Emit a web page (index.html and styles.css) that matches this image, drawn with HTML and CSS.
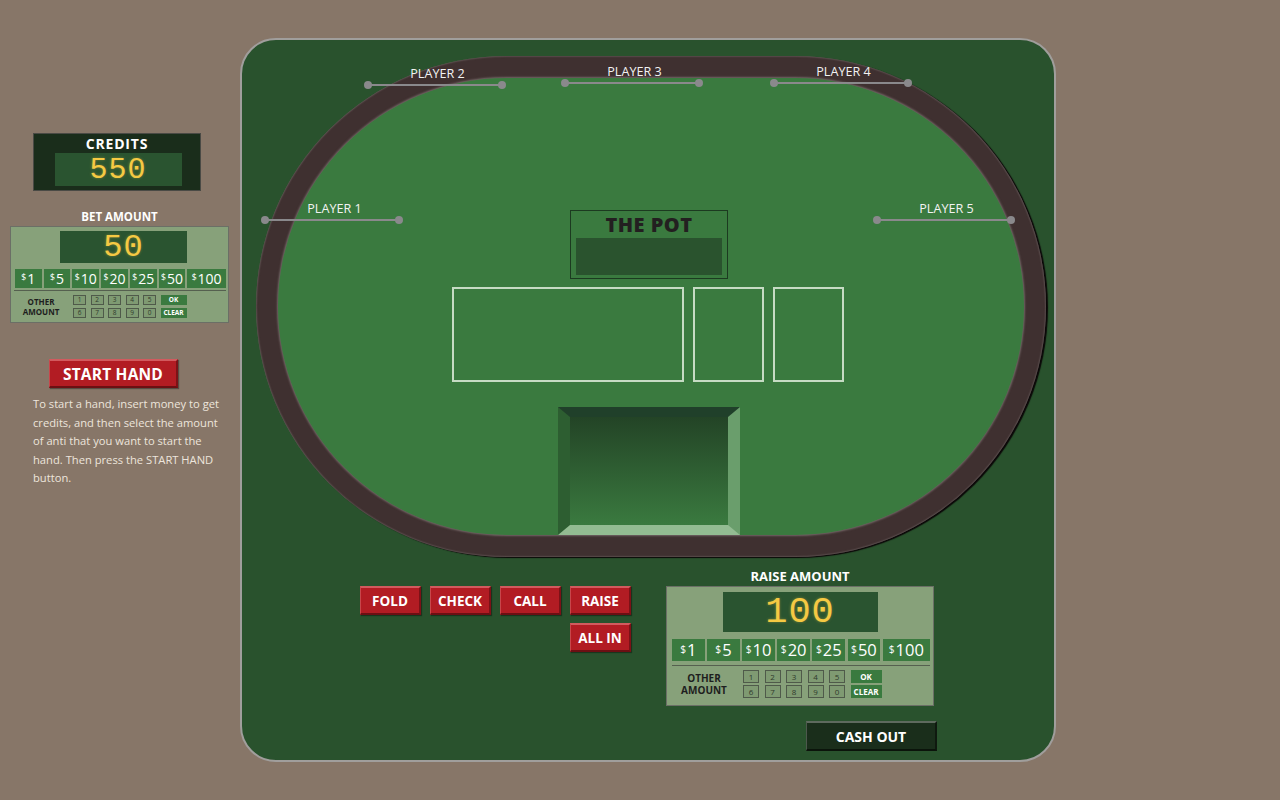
FILE: index.html
```html
<!DOCTYPE html>
<html lang="en">
<head>
<meta charset="utf-8">
<title>Poker Table</title>
<link rel="stylesheet" href="styles.css">
</head>
<body>
<div class="page">
  <aside class="side">
    <div class="credits">
      <div class="credits-title">CREDITS</div>
      <div class="lcd lcd-credits">550</div>
    </div>

    <div class="amount amount-bet">
      <div class="amount-title">BET AMOUNT</div>
      <div class="amount-panel">
        <div class="lcd">50</div>
        <div class="chips">
          <span class="chip"><sup>$</sup>1</span>
          <span class="chip"><sup>$</sup>5</span>
          <span class="chip"><sup>$</sup>10</span>
          <span class="chip"><sup>$</sup>20</span>
          <span class="chip"><sup>$</sup>25</span>
          <span class="chip"><sup>$</sup>50</span>
          <span class="chip"><sup>$</sup>100</span>
        </div>
        <div class="divider"></div>
        <div class="other">
          <div class="other-label">OTHER<br>AMOUNT</div>
          <div class="keys">
            <span class="key">1</span><span class="key">2</span><span class="key">3</span><span class="key">4</span><span class="key">5</span><span class="key-act">OK</span>
            <span class="key">6</span><span class="key">7</span><span class="key">8</span><span class="key">9</span><span class="key">0</span><span class="key-act">CLEAR</span>
          </div>
        </div>
      </div>
    </div>

    <button class="btn-red start">START HAND</button>
    <p class="help">To start a hand, insert money to get<br>credits, and then select the amount<br>of anti that you want to start the<br>hand. Then press the START HAND<br>button.</p>
  </aside>

  <main class="table">
    <div class="rail">
      <div class="felt">
        <div class="pot">
          <div class="pot-title">THE POT</div>
          <div class="pot-value"></div>
        </div>
        <div class="cards">
          <div class="card-slot wide"></div>
          <div class="card-slot"></div>
          <div class="card-slot"></div>
        </div>
        <div class="tray"></div>
      </div>
    </div>

    <div class="seat seat-1"><span class="seat-name">PLAYER 1</span><span class="seat-line"></span></div>
    <div class="seat seat-2"><span class="seat-name">PLAYER 2</span><span class="seat-line"></span></div>
    <div class="seat seat-3"><span class="seat-name">PLAYER 3</span><span class="seat-line"></span></div>
    <div class="seat seat-4"><span class="seat-name">PLAYER 4</span><span class="seat-line"></span></div>
    <div class="seat seat-5"><span class="seat-name">PLAYER 5</span><span class="seat-line"></span></div>

    <div class="controls">
      <div class="actions">
        <button class="btn-red">FOLD</button>
        <button class="btn-red">CHECK</button>
        <button class="btn-red">CALL</button>
        <button class="btn-red">RAISE</button>
        <button class="btn-red allin">ALL IN</button>
      </div>
      <div class="raise-col">
        <div class="amount amount-raise">
          <div class="amount-title">RAISE AMOUNT</div>
          <div class="amount-panel">
            <div class="lcd">100</div>
            <div class="chips">
              <span class="chip"><sup>$</sup>1</span>
              <span class="chip"><sup>$</sup>5</span>
              <span class="chip"><sup>$</sup>10</span>
              <span class="chip"><sup>$</sup>20</span>
              <span class="chip"><sup>$</sup>25</span>
              <span class="chip"><sup>$</sup>50</span>
              <span class="chip"><sup>$</sup>100</span>
            </div>
            <div class="divider"></div>
            <div class="other">
              <div class="other-label">OTHER<br>AMOUNT</div>
              <div class="keys">
                <span class="key">1</span><span class="key">2</span><span class="key">3</span><span class="key">4</span><span class="key">5</span><span class="key-act">OK</span>
                <span class="key">6</span><span class="key">7</span><span class="key">8</span><span class="key">9</span><span class="key">0</span><span class="key-act">CLEAR</span>
              </div>
            </div>
          </div>
        </div>
        <button class="cashout">CASH OUT</button>
      </div>
    </div>
  </main>
</div>
</body>
</html>
```

FILE: styles.css
```css
* { box-sizing: border-box; }

html, body {
  margin: 0;
  padding: 0;
  background: #877668;
  font-family: "Open Sans", "Noto Sans", sans-serif;
}

.page {
  display: flex;
  align-items: flex-start;
  width: 1280px;
  height: 800px;
}

/* ---------- sidebar ---------- */
.side {
  width: 240px;
  flex: none;
  padding-top: 133px;
  display: flex;
  flex-direction: column;
  align-items: flex-start;
}

.credits {
  margin-left: 33px;
  width: 168px;
  height: 58px;
  background: #1a2d1b;
  border: 1px solid #4a4a45;
  display: flex;
  flex-direction: column;
  align-items: center;
}

.credits-title {
  height: 19px;
  line-height: 19px;
  color: #fff;
  font-weight: 700;
  font-size: 14px;
  letter-spacing: 0.8px;
}

.lcd {
  background: #2a5430;
  color: #f5c943;
  font-family: "Liberation Mono", "DejaVu Sans Mono", monospace;
  text-align: center;
  text-shadow: 0 0 3px rgba(245, 201, 67, 0.4);
}

.lcd-credits {
  width: 127px;
  height: 33px;
  line-height: 34px;
  font-size: 30px;
  letter-spacing: 1px;
  margin-left: 2px;
}

/* ---------- amount panels ---------- */
.amount-title {
  color: #fff;
  font-weight: 700;
  text-align: center;
}

.amount-panel {
  background: #87a17a;
  border: 1px solid #6b6f66;
  display: flex;
  flex-direction: column;
}

.amount-panel .lcd {
  align-self: center;
}

.chips {
  display: grid;
  grid-template-columns: repeat(6, 1fr) 1.45fr;
}

.chip {
  background: #3a7a3f;
  color: #fff;
  text-align: center;
  white-space: nowrap;
}

.chip sup {
  font-size: 62%;
  vertical-align: top;
  position: relative;
  top: -1px;
  margin-right: 1px;
}

.divider {
  height: 1px;
  background: #55604f;
}

.other {
  display: flex;
  align-items: center;
}

.other-label {
  color: #1e1e1e;
  font-weight: 700;
  text-align: center;
}

.keys {
  display: grid;
}

.key {
  border: 1px solid #4f5a4a;
  background: #7f9a72;
  color: #2f3a2c;
  text-align: center;
}

.key-act {
  background: #3a7a3f;
  color: #fff;
  font-weight: 700;
  text-align: center;
}

/* bet (small) */
.amount-bet {
  margin-top: 19px;
  margin-left: 10px;
  width: 219px;
}

.amount-bet .amount-title {
  height: 16px;
  line-height: 14px;
  font-size: 11.5px;
}

.amount-bet .amount-panel {
  height: 97px;
  padding: 4px 2px 0 3px;
}

.amount-bet .lcd {
  width: 127px;
  height: 32px;
  line-height: 33px;
  font-size: 32px;
  letter-spacing: 1px;
  margin-left: 7px;
}

.amount-bet .chips {
  margin-top: 6px;
  margin-left: 1px;
  height: 19px;
  column-gap: 2px;
}

.amount-bet .chip {
  font-size: 14px;
  line-height: 19px;
}

.amount-bet .divider {
  margin-top: 2px;
}

.amount-bet .other {
  margin-top: 4px;
  padding-left: 1px;
}

.amount-bet .other-label {
  width: 52px;
  font-size: 8px;
  line-height: 10px;
}

.amount-bet .keys {
  margin-left: 6px;
  grid-template-columns: repeat(5, 13px) 26px;
  grid-template-rows: 10px 10px;
  column-gap: 4.5px;
  row-gap: 3px;
}

.amount-bet .key {
  font-size: 6.5px;
  line-height: 8px;
}

.amount-bet .key-act {
  font-size: 6.5px;
  line-height: 10px;
}

/* raise (large) */
.amount-raise {
  width: 268px;
}

.amount-raise .amount-title {
  height: 17px;
  line-height: 15px;
  font-size: 13px;
}

.amount-raise .amount-panel {
  height: 120px;
  padding: 5px 3px 0 5px;
}

.amount-raise .lcd {
  width: 155px;
  height: 40px;
  line-height: 41px;
  font-size: 37px;
  letter-spacing: 1px;
  margin-left: -2px;
}

.amount-raise .chips {
  margin-top: 7px;
  height: 22px;
  column-gap: 2.5px;
}

.amount-raise .chip {
  font-size: 16.5px;
  line-height: 22px;
}

.amount-raise .divider {
  margin-top: 4px;
}

.amount-raise .other {
  margin-top: 4px;
}

.amount-raise .other-label {
  width: 64px;
  font-size: 10px;
  line-height: 12px;
}

.amount-raise .keys {
  margin-left: 7px;
  grid-template-columns: repeat(5, 16px) 31px;
  grid-template-rows: 13px 13px;
  column-gap: 5.5px;
  row-gap: 2px;
}

.amount-raise .key {
  font-size: 8px;
  line-height: 11px;
}

.amount-raise .key-act {
  font-size: 8px;
  line-height: 13px;
}

/* ---------- buttons ---------- */
.btn-red {
  display: block;
  padding: 0;
  margin: 0;
  background: #b21c23;
  color: #fff;
  font-family: "Open Sans", "Noto Sans", sans-serif;
  font-weight: 700;
  font-size: 13.5px;
  border-top: 2px solid #d25a5e;
  border-left: 1px solid #c8464b;
  border-bottom: 2px solid #6c0f13;
  border-right: 2px solid #7c1217;
  box-shadow: 1px 1px 1px rgba(0, 0, 0, 0.35);
}

.start {
  margin-top: 36px;
  margin-left: 49px;
  width: 129px;
  height: 29px;
  font-size: 15.5px;
  letter-spacing: 0.2px;
}

.help {
  margin: 7px 0 0 33px;
  width: 205px;
  color: #ede5dc;
  font-size: 11.2px;
  line-height: 18.5px;
}

/* ---------- table ---------- */
.table {
  position: relative;
  flex: none;
  margin-top: 38px;
  width: 816px;
  height: 724px;
  background: #29522d;
  border: 2px solid #a09e9c;
  border-radius: 36px;
}

.rail {
  margin: 16px 0 0 14px;
  width: 790px;
  height: 501px;
  padding: 22px;
  border-radius: 251px;
  background: #3f3030;
  box-shadow: inset 0 0 2px 0 rgba(175, 165, 165, 0.7), 2px 1px 1px #0b0808;
}

.felt {
  height: 100%;
  border-radius: 229px;
  background: #3a7a3f;
  box-shadow: 0 0 2px 1px rgba(150, 138, 138, 0.6);
  padding-top: 132px;
  display: flex;
  flex-direction: column;
  align-items: flex-start;
}

.pot {
  margin-left: 292px;
  width: 158px;
  height: 69px;
  border: 1px solid #1c3a20;
  padding: 0 5px 3px 5px;
  display: flex;
  flex-direction: column;
}

.pot-title {
  height: 27px;
  line-height: 28px;
  text-align: center;
  color: #231f20;
  font-weight: 800;
  font-size: 20px;
  letter-spacing: 0.5px;
}

.pot-value {
  flex: 1;
  background: #2a532e;
}

.cards {
  margin-top: 8px;
  margin-left: 174px;
  display: flex;
  gap: 9px;
}

.card-slot {
  width: 71px;
  height: 95px;
  border: 2px solid #c6dbc4;
}

.card-slot.wide {
  width: 232px;
}

.tray {
  margin-top: 25px;
  margin-left: 280px;
  width: 182px;
  height: 128px;
  border-top: 10px solid #20402a;
  border-left: 12px solid #2d5e31;
  border-right: 12px solid #6a9e6c;
  border-bottom: 10px solid #93bc92;
  background: linear-gradient(#234426, #3a7a3f);
}

/* seats are pinned on the table canvas */
.seat {
  position: absolute;
  width: 142px;
  display: flex;
  flex-direction: column;
  align-items: center;
}

.seat-name {
  height: 14px;
  line-height: 14px;
  color: #f2f2f2;
  font-size: 12.6px;
  margin-left: 5px;
  white-space: nowrap;
}

.seat-line {
  position: relative;
  display: block;
  width: 142px;
  height: 8px;
  background: linear-gradient(#8a898c, #8a898c) center / calc(100% - 8px) 2px no-repeat;
}

.seat-line::before,
.seat-line::after {
  content: "";
  position: absolute;
  top: 0;
  width: 8px;
  height: 8px;
  border-radius: 50%;
  background: #8a898c;
}

.seat-line::before { left: 0; }
.seat-line::after { right: 0; }

.seat-1 { left: 19px; top: 162px; }
.seat-2 { left: 122px; top: 27px; }
.seat-3 { left: 319px; top: 25px; }
.seat-4 { left: 528px; top: 25px; }
.seat-5 { left: 631px; top: 162px; }

/* ---------- controls ---------- */
.controls {
  display: flex;
  align-items: flex-start;
  margin-top: 12px;
  padding-left: 118px;
}

.actions {
  margin-top: 17px;
  display: grid;
  grid-template-columns: repeat(4, 61px);
  grid-template-rows: 29px 29px;
  column-gap: 9px;
  row-gap: 8px;
}

.allin {
  grid-column: 4;
}

.raise-col {
  margin-left: 35px;
  display: flex;
  flex-direction: column;
  align-items: flex-start;
}

.cashout {
  margin-top: 15px;
  margin-left: 140px;
  width: 131px;
  height: 30px;
  padding: 0;
  background: #1a2e1b;
  color: #fff;
  font-family: "Open Sans", "Noto Sans", sans-serif;
  font-weight: 700;
  font-size: 14px;
  border-top: 2px solid #5e6a5e;
  border-left: 1px solid #4d584d;
  border-bottom: 2px solid #0b140b;
  border-right: 2px solid #0f190f;
}
```
